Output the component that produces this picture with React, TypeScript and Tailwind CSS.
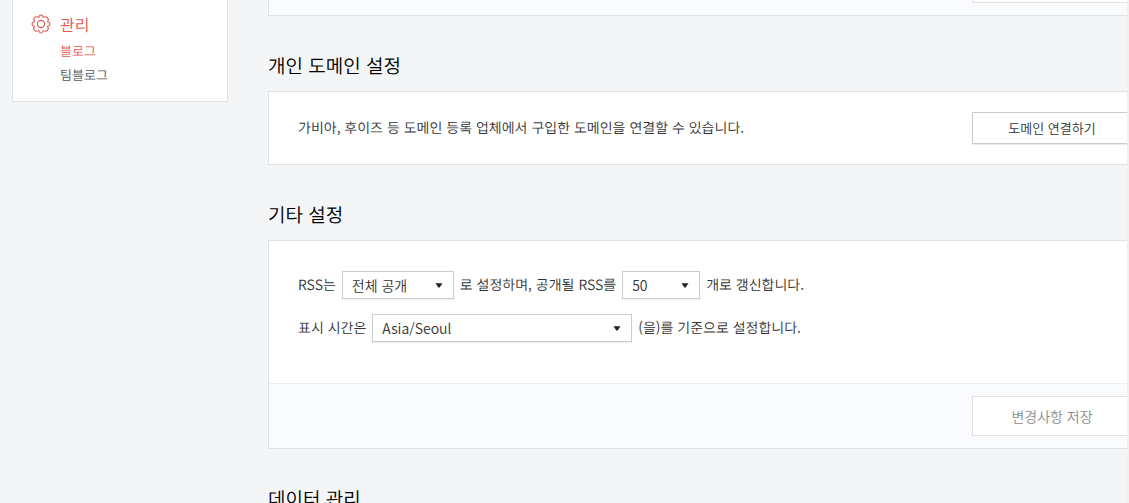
import type { ReactNode } from "react";

function GearIcon() {
  return (
    <svg viewBox="0 0 20 20" className="size-5 shrink-0" fill="none" stroke="#e5574b" strokeWidth="1.1" strokeLinejoin="round" aria-hidden="true">
      <path d="M8 3 Q8.2 1 10 1 Q11.8 1 12 3 L12.4 3.4 Q14.8 1.9 16.4 3.6 Q18.1 5.2 16.6 7.6 L17 8 Q19 8.2 19 10 Q19 11.8 17 12 L16.6 12.4 Q18.1 14.8 16.4 16.4 Q14.8 18.1 12.4 16.6 L12 17 Q11.8 19 10 19 Q8.2 19 8 17 L7.6 16.6 Q5.2 18.1 3.6 16.4 Q1.9 14.8 3.4 12.4 L3 12 Q1 11.8 1 10 Q1 8.2 3 8 L3.4 7.6 Q1.9 5.2 3.6 3.6 Q5.2 1.9 7.6 3.4 Z" />
      <circle cx="10" cy="10" r="3.6" />
    </svg>
  );
}

function Sidebar() {
  return (
    <nav className="-mt-1 w-[216px] shrink-0 self-start border border-[#e0e3e6] bg-white px-[18px] pt-3 pb-[14px]">
      <a href="#manage" className="flex items-center gap-[9px] text-[16px] leading-[30px] text-[#e5574b]">
        <GearIcon />
        관리
      </a>
      <ul className="pl-[29px] text-[13px] leading-6">
        <li>
          <a href="#blog" className="text-[#e5574b]">블로그</a>
        </li>
        <li>
          <a href="#team-blog" className="text-[#555]">팀블로그</a>
        </li>
      </ul>
    </nav>
  );
}

function SaveBar() {
  return (
    <div className="flex justify-end border-t border-[#eceef1] bg-[#fafbfd] py-3 pr-[19px]">
      <button type="button" className="h-10 w-40 border border-[#dfe1e5] bg-white text-[14px] text-[#8c8c8c]">
        변경사항 저장
      </button>
    </div>
  );
}

function Panel({ children }: { children: ReactNode }) {
  return <div className="border border-[#e0e3e6] bg-white">{children}</div>;
}

function Heading({ children }: { children: ReactNode }) {
  return <h2 className="mt-[35px] mb-[10px] text-[19px] leading-[30px] font-[350] text-black">{children}</h2>;
}

function Select({ id, options, width }: { id: string; options: string[]; width: string }) {
  return (
    <span className={`relative ${width}`}>
      <select
        id={id}
        className="h-7 w-full appearance-none rounded-none border border-[#c9ccd0] bg-white pl-[9px] text-[14px] text-[#333] shadow-[0_1px_1px_rgba(0,0,0,0.06)]"
      >
        {options.map((option) => (
          <option key={option}>{option}</option>
        ))}
      </select>
      <svg viewBox="0 0 8 5" className="pointer-events-none absolute top-3 right-[11px] h-[5px] w-2" aria-hidden="true">
        <path d="M0.5 0.3h7L4.6 4.5H3.4z" fill="#222" />
      </svg>
    </span>
  );
}

export default function App() {
  return (
    <div
      lang="ko"
      className="flex h-screen overflow-hidden border-r-2 border-[#f0f0f0] bg-[#f3f5f7] pl-3 font-['Noto_Sans_CJK_KR',sans-serif] text-[14px] font-[350] text-[#333] [text-rendering:geometricPrecision]"
    >
      <Sidebar />
      <main className="ml-10 min-w-0 flex-1 overflow-hidden">
        <div className="-mt-[51px] w-full min-w-[884px]">
          <Panel>
            <SaveBar />
          </Panel>

          <Heading>개인 도메인 설정</Heading>
          <Panel>
            <div className="flex items-center justify-between py-5 pr-[19px] pl-[29px]">
              <p>가비아, 후이즈 등 도메인 등록 업체에서 구입한 도메인을 연결할 수 있습니다.</p>
              <button
                type="button"
                className="h-8 w-40 border border-[#c9ccd0] bg-white text-[13px] shadow-[0_1px_1px_rgba(0,0,0,0.08)]"
              >
                도메인 연결하기
              </button>
            </div>
          </Panel>

          <Heading>기타 설정</Heading>
          <Panel>
            <div className="flex flex-col gap-[15px] px-[29px] pt-[30px] pb-[41px]">
              <div className="flex h-7 items-center gap-1.5">
                <label htmlFor="rss-scope">RSS는</label>
                <Select id="rss-scope" options={["전체 공개"]} width="w-28" />
                <label htmlFor="rss-count">로 설정하며, 공개될 RSS를</label>
                <Select id="rss-count" options={["50"]} width="w-[78px]" />
                <span>개로 갱신합니다.</span>
              </div>
              <div className="flex h-7 items-center gap-1.5">
                <label htmlFor="timezone">표시 시간은</label>
                <Select id="timezone" options={["Asia/Seoul"]} width="w-[260px]" />
                <span>(을)를 기준으로 설정합니다.</span>
              </div>
            </div>
            <SaveBar />
          </Panel>

          <Heading>데이터 관리</Heading>
        </div>
      </main>
    </div>
  );
}
